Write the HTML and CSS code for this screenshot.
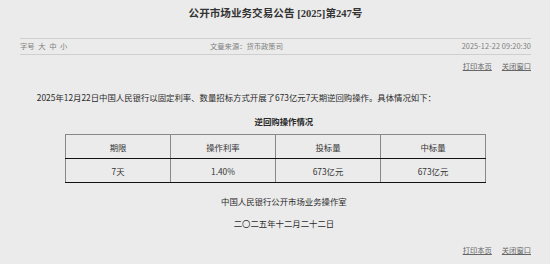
FILE: index.html
```html
<!DOCTYPE html>
<html lang="zh-CN">
<head>
  <meta charset="UTF-8" />
  <meta name="viewport" content="width=device-width, initial-scale=1.0" />
  <title>公开市场业务交易公告 [2025]第247号</title>
  <link rel="stylesheet" href="styles.css">
</head>
<body>
<div class="page">
  <h1 class="title">公开市场业务交易公告 [2025]第247号</h1>

  <!-- meta row -->
  <div class="meta">
    <span class="fontsize">字号 <a href="#">大</a> <a href="#">中</a> <a href="#">小</a></span>
    <span class="source">文章来源：货币政策司</span>
    <span class="date">2025-12-22 09:20:30</span>
  </div>
  <div class="tools"><a href="#">打印本页</a><a href="#">关闭窗口</a></div>

  <!-- body -->
  <div class="content">
    <p class="lead">2025年12月22日中国人民银行以固定利率、数量招标方式开展了673亿元7天期逆回购操作。具体情况如下：</p>
    <p class="caption">逆回购操作情况</p>
    <table class="ops">
      <tr><td>期限</td><td>操作利率</td><td>投标量</td><td>中标量</td></tr>
      <tr><td>7天</td><td>1.40%</td><td>673亿元</td><td>673亿元</td></tr>
    </table>
    <p class="sign first">中国人民银行公开市场业务操作室</p>
    <p class="sign">二〇二五年十二月二十二日</p>
  </div>

  <div class="tools bottom"><a href="#">打印本页</a><a href="#">关闭窗口</a></div>
</div>
</body>
</html>
```

FILE: styles.css
```css
:root { --bg:#ebebeb; --line:#cfcfcf; --muted:#808080; }
*{box-sizing:border-box}
html{overflow:hidden}
body{margin:0;background:var(--bg);color:#222;font-family:"Noto Sans CJK SC","Noto Sans",sans-serif}
a{color:inherit}
.page{padding:0 19px 0 20px}

.title{margin:0;height:28px;line-height:28px;text-align:center;font-family:"Liberation Serif","Noto Sans CJK SC",serif;font-size:10.6px;font-weight:bold;color:#333}

.meta{margin-top:10px;display:grid;grid-template-columns:190px 1fr auto;border-top:1px solid var(--line);border-bottom:1px solid var(--line);line-height:15px;font-size:7.3px;color:var(--muted)}
.meta a{text-decoration:none;margin-left:2px}
.date{letter-spacing:.1px}

.tools{display:flex;justify-content:flex-end;gap:10px;line-height:22px;font-size:7.3px;color:#666}
.tools.bottom{margin-top:8px}

.content p{margin:0;font-size:8.4px;line-height:16px;text-indent:2em;color:#2a2a2a}
.lead{margin-top:12px !important}
.caption{margin-top:8px !important;text-align:center;font-weight:bold}
.sign{text-align:center;margin-top:6px !important}
.sign.first{margin-top:10px !important}

.ops{margin:5px auto 0;width:421px;border-collapse:collapse;font-size:8.4px;table-layout:fixed;color:#333}
.ops td{height:24px;padding:0;text-align:center;border:1px solid #888}
.ops tr:first-child td{border-bottom:1px solid #111}
.ops tr:last-child td{border-bottom:1px solid #111}
```
